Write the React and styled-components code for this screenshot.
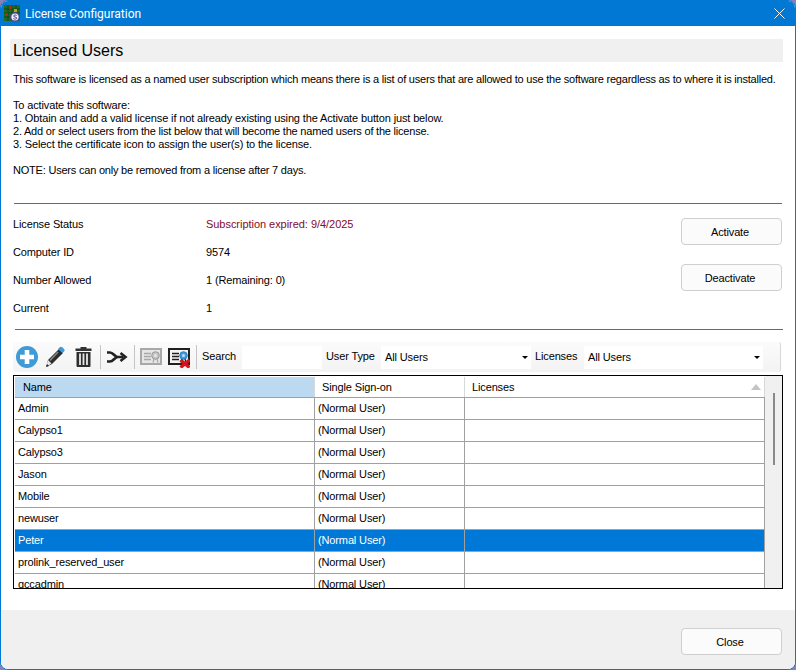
import React from 'react'
import styled, { createGlobalStyle } from 'styled-components'

const users = ['Admin', 'Calypso1', 'Calypso3', 'Jason', 'Mobile', 'newuser', 'Peter', 'prolink_reserved_user', 'qccadmin']

const statusRows = [
    { label: 'License Status', value: 'Subscription expired: 9/4/2025', expired: true },
    { label: 'Computer ID', value: '9574' },
    { label: 'Number Allowed', value: '1 (Remaining: 0)' },
    { label: 'Current', value: '1' },
]

function AppIcon() {
    return (
        <svg width="17" height="17" viewBox="0 0 17 17">
            <rect x="0" y="0" width="16" height="16" fill="#1f6b24" />
            <path d="M0 4h16M0 8h16M0 12h16M4 0v16M8 0v16M12 0v16" stroke="#0d4a14" strokeWidth="1" />
            <rect x="5" y="1" width="3" height="3" fill="#a82a1c" />
            <rect x="10" y="4" width="3" height="3" fill="#b8a020" />
            <rect x="1" y="8" width="3" height="3" fill="#a82a1c" />
            <circle cx="11" cy="12" r="5" fill="#4a4a8c" />
            <circle cx="11" cy="12" r="3.6" fill="#f4f4fb" />
            <path d="M12.6 10.5c-1-.8-3-.6-3 .6s3.2.8 3.2 2-2.300 1.400-3.400.5" fill="none" stroke="#3b3b88" strokeWidth="1" />
        </svg>
    )
}

function PlusIcon() {
    return (
        <svg width="22" height="22" viewBox="0 0 22 22">
            <circle cx="11" cy="11" r="11" fill="#3e9bd8" />
            <path d="M11 4v14M4 11h14" stroke="#fff" strokeWidth="4.600" />
        </svg>
    )
}

function PencilIcon() {
    return (
        <svg width="20" height="22" viewBox="0 0 20 22">
            <path d="M14 3l4 4L7 18l-6 3 2-7z" fill="#2c2c2c" />
            <path d="M14.500 1.500a2 2 0 0 1 3 0l1.300 1.300a2 2 0 0 1 0 3L17.500 7 13 3z" fill="#3e9bd8" />
            <path d="M13 6L5 14.500" stroke="#8a8a8a" strokeWidth="1.500" />
            <path d="M3 14l3.500 3.500L1 21z" fill="#e8e8e8" />
            <path d="M1 21l1-3 2 2z" fill="#222" />
        </svg>
    )
}

function TrashIcon() {
    return (
        <svg width="17" height="20" viewBox="0 0 17 20">
            <path d="M5.500 0h6v1.500h-6zM.5 1.500h16V4H.5z" fill="#333" />
            <path d="M1.500 5h14v14a1 1 0 0 1-1 1h-12a1 1 0 0 1-1-1z" fill="#2e2e2e" />
            <path d="M5 6.500v11.500M8.500 6.500v11.500M12 6.500v11.500" stroke="#e8e8e8" strokeWidth="1.800" />
        </svg>
    )
}

function MergeIcon() {
    return (
        <svg width="22" height="12" viewBox="0 0 22 12">
            <path d="M1 1.500h3c3.500 0 4.500 4.500 8 4.500h5M1 10.500h3c3.500 0 4.500-4.500 8-4.500" fill="none" stroke="#222" strokeWidth="2.700" />
            <path d="M14.500 2l5 4-5 4" fill="none" stroke="#222" strokeWidth="2.600" />
        </svg>
    )
}

function CertIcon({ disabled }) {
    const edge = disabled ? '#a8a8a8' : '#1f1f1f'
    const seal = disabled ? '#c4c4c4' : '#3e9bd8'
    return (
        <svg width="22" height="22" viewBox="0 0 22 22">
            <rect x="1" y="3" width="20" height="15" fill={disabled ? '#e6e6e6' : '#f4f4f4'} stroke={edge} strokeWidth="2" />
            <path d="M4 7.500h7M4 10.500h7M4 13.500h7" stroke={edge} strokeWidth="1.400" />
            <circle cx="15.500" cy="9.500" r="3.800" fill={seal} stroke={disabled ? '#999' : '#2a7fbe'} />
            <circle cx="15.500" cy="9.500" r="1.500" fill={disabled ? '#e6e6e6' : '#bfe0f5'} />
            <path d="M14 13l-1 3.500M17 13l1 3.500" stroke={edge} strokeWidth="1.200" />
            {!disabled && <path d="M12.500 14l9 7.500M21.500 14l-9 7.500" stroke="#d3141c" strokeWidth="3.400" />}
        </svg>
    )
}

function CloseIcon() {
    return (
        <svg width="11" height="11" viewBox="0 0 11 11">
            <path d="M.5.5l10 10M10.500.5l-10 10" stroke="#fff" strokeWidth="1" />
        </svg>
    )
}

function App() {
    return (
        <Win>
            <GlobalStyle />
            <TitleBar>
                <TitleLeft>
                    <AppIcon />
                    <TitleText>License Configuration</TitleText>
                </TitleLeft>
                <CloseIcon />
            </TitleBar>
            <Body>
                <Heading>Licensed Users</Heading>
                <Intro>
                    <Tight as="p">This software is licensed as a named user subscription which means there is a list of users that are allowed to use the software regardless as to where it is installed.</Tight>
                    <p>To activate this software:<br />
                        1. Obtain and add a valid license if not already existing using the Activate button just below.<br />
                        <Tight>2. Add or select users from the list below that will become the named users of the license.</Tight><br />
                        3. Select the certificate icon to assign the user(s) to the license.</p>
                    <Tight as="p">NOTE: Users can only be removed from a license after 7 days.</Tight>
                </Intro>
                <Divider />
                <StatusArea>
                    <StatusList>
                        {statusRows.map(row => (
                            <StatusRow key={row.label}>
                                <StatusLabel>{row.label}</StatusLabel>
                                <StatusValue $expired={row.expired}>{row.value}</StatusValue>
                            </StatusRow>
                        ))}
                    </StatusList>
                    <StatusButtons>
                        <Button>Activate</Button>
                        <Button>Deactivate</Button>
                    </StatusButtons>
                </StatusArea>
                <Divider $second />
                <Toolbar>
                    <ToolIcon $w={22}><PlusIcon /></ToolIcon>
                    <ToolIcon $w={20} $left={7}><PencilIcon /></ToolIcon>
                    <ToolIcon $w={17} $left={10}><TrashIcon /></ToolIcon>
                    <ToolSep $left={8} />
                    <ToolIcon $w={22} $left={5}><MergeIcon /></ToolIcon>
                    <ToolSep $left={6} />
                    <ToolIcon $w={22} $left={5}><CertIcon disabled /></ToolIcon>
                    <ToolIcon $w={22} $left={6}><CertIcon /></ToolIcon>
                    <ToolSep $left={6} />
                    <ToolLabel $w={40} $left={5}>Search</ToolLabel>
                    <SearchBox />
                    <ToolLabel $w={55} $left={4}>User Type</ToolLabel>
                    <Combo $w={150}>All Users<ComboArrow /></Combo>
                    <ToolLabel $w={49} $left={4}>Licenses</ToolLabel>
                    <Combo $w={179}>All Users<ComboArrow /></Combo>
                </Toolbar>
                <TableFrame>
                    <Grid>
                        <HeaderRow>
                            <HeaderCell $w={300} $active>Name</HeaderCell>
                            <HeaderCell $w={150}>Single Sign-on</HeaderCell>
                            <HeaderCell $w={300}>Licenses<SortArrow /></HeaderCell>
                        </HeaderRow>
                        {users.map(name => (
                            <Row key={name} $selected={name === 'Peter'}>
                                <Cell $w={300}>{name}</Cell>
                                <Cell $w={150}>(Normal User)</Cell>
                                <Cell $w={300} />
                            </Row>
                        ))}
                    </Grid>
                    <ScrollTrack>
                        <ScrollThumb />
                    </ScrollTrack>
                </TableFrame>
            </Body>
            <Footer>
                <Button>Close</Button>
            </Footer>
        </Win>
    )
}

export default App

const GlobalStyle = createGlobalStyle`
    html, body {
        margin: 0;
        padding: 0;
        background: #8d7fb5;
    }
    body {
        font-family: "Liberation Sans", Arial, sans-serif;
        font-size: 11px;
        letter-spacing: -0.135px;
        color: #000;
    }
`

const Win = styled.div`
    width: 796px;
    height: 670px;
    box-sizing: border-box;
    border: 1px solid #0078d4;
    border-radius: 8px;
    overflow: hidden;
    display: flex;
    flex-direction: column;
    background: #fff;
`

const TitleBar = styled.div`
    height: 25px;
    flex: none;
    background: #0078d4;
    display: flex;
    align-items: center;
    justify-content: space-between;
    padding: 0 10px 0 3px;
`

const TitleLeft = styled.div`
    display: flex;
    align-items: center;
    gap: 4px;
`

const TitleText = styled.span`
    color: #fff;
    font-family: "Roboto", sans-serif;
    font-size: 12px;
    letter-spacing: 0;
`

const Body = styled.div`
    flex: 1;
    padding: 13px 12px 0 9px;
    display: flex;
    flex-direction: column;
`

const Heading = styled.div`
    height: 23px;
    line-height: 24px;
    background: #f0f0f0;
    font-size: 16px;
    letter-spacing: 0;
    padding-left: 3px;
`

const Intro = styled.div`
    margin-top: 11px;
    padding-left: 3px;
    line-height: 13px;
    height: 130px;
    white-space: nowrap;
    p {
        margin: 0 0 13px;
    }
`

const Tight = styled.span`
    letter-spacing: -0.21px;
`

const Divider = styled.div`
    height: 1px;
    background: #6a6a6a;
    margin-left: ${props => (props.$second ? '5px' : '4px')};
    margin-right: ${props => (props.$second ? '0' : '1px')};
`

const StatusArea = styled.div`
    height: 125px;
    display: flex;
    justify-content: space-between;
`

const StatusList = styled.div`
    padding: 6px 0 0 3px;
`

const StatusRow = styled.div`
    height: 28px;
    display: flex;
    align-items: center;
`

const StatusLabel = styled.div`
    width: 193px;
`

const StatusValue = styled.div`
    color: ${props => (props.$expired ? '#850a28' : '#000')};
    letter-spacing: ${props => (props.$expired ? '-0.04px' : 'inherit')};
`

const StatusButtons = styled.div`
    padding: 14px 1px 0 0;
    display: flex;
    flex-direction: column;
    gap: 19px;
`

const Button = styled.button`
    width: 101px;
    height: 27px;
    padding: 0 3px 0 0;
    background: #fbfbfb;
    border: 1px solid #cfcfcf;
    border-radius: 4px;
    font: inherit;
    letter-spacing: inherit;
    color: #000;
`

const Toolbar = styled.div`
    margin: 12px 2px 0 3px;
    height: 30px;
    box-sizing: border-box;
    padding: 0 0 0 3px;
    display: flex;
    align-items: center;
    background: linear-gradient(#fbfbfb, #f3f3f3);
    border-radius: 3px;
    border-right: 1px solid #d8d8d8;
`

const ToolIcon = styled.div`
    width: ${props => props.$w}px;
    margin-left: ${props => props.$left || 0}px;
    display: flex;
    justify-content: center;
    flex: none;
`

const ToolSep = styled.div`
    width: 1px;
    height: 24px;
    background: #c4c4c4;
    margin-left: ${props => props.$left}px;
    flex: none;
`

const ToolLabel = styled.div`
    width: ${props => props.$w}px;
    margin-left: ${props => props.$left || 0}px;
    padding-bottom: 2px;
    flex: none;
    white-space: nowrap;
`

const SearchBox = styled.div`
    width: 80px;
    height: 23px;
    background: #fff;
    flex: none;
`

const Combo = styled.div`
    width: ${props => props.$w}px;
    height: 23px;
    line-height: 23px;
    padding-left: 4px;
    box-sizing: border-box;
    background: #fff;
    flex: none;
    position: relative;
`

const ComboArrow = styled.span`
    position: absolute;
    right: 3px;
    top: 10px;
    border-left: 3px solid transparent;
    border-right: 3px solid transparent;
    border-top: 3px solid #000;
`

const TableFrame = styled.div`
    margin: 3px 0 0 3px;
    height: 214px;
    box-sizing: border-box;
    border: 1px solid #000;
    display: flex;
    overflow: hidden;
`

const Grid = styled.div`
    width: 750px;
    padding-left: 1px;
    flex: none;
`

const HeaderRow = styled.div`
    display: flex;
    height: 20px;
    margin-top: 1px;
    border-bottom: 1px solid #a0a0a0;
    box-sizing: content-box;
`

const HeaderCell = styled.div`
    width: ${props => props.$w}px;
    box-sizing: border-box;
    padding-left: ${props => (props.$active ? '8px' : '7px')};
    line-height: 20px;
    background: ${props => (props.$active ? '#bbdaf2' : '#fff')};
    border-right: 1px solid #d8d8d8;
    position: relative;
`

const SortArrow = styled.span`
    position: absolute;
    right: 3px;
    top: 7px;
    border-left: 5px solid transparent;
    border-right: 5px solid transparent;
    border-bottom: 6px solid #c4c4c4;
`

const Row = styled.div`
    display: flex;
    height: 21px;
    border-bottom: 1px solid #a0a0a0;
    box-sizing: content-box;
    background: ${props => (props.$selected ? '#0078d7' : '#fff')};
    color: ${props => (props.$selected ? '#fff' : '#000')};
`

const Cell = styled.div`
    width: ${props => props.$w}px;
    box-sizing: border-box;
    padding-left: 3px;
    line-height: 21px;
    border-right: 1px solid #a0a0a0;
`

const ScrollTrack = styled.div`
    flex: 1;
    background: #f0f0f0;
    display: flex;
    justify-content: center;
    padding-top: 17px;
`

const ScrollThumb = styled.div`
    width: 2px;
    height: 72px;
    background: #8a8a8a;
`

const Footer = styled.div`
    height: 59px;
    flex: none;
    background: #f0f0f0;
    display: flex;
    justify-content: flex-end;
    padding: 18px 13px 0 0;
    box-sizing: border-box;
`
